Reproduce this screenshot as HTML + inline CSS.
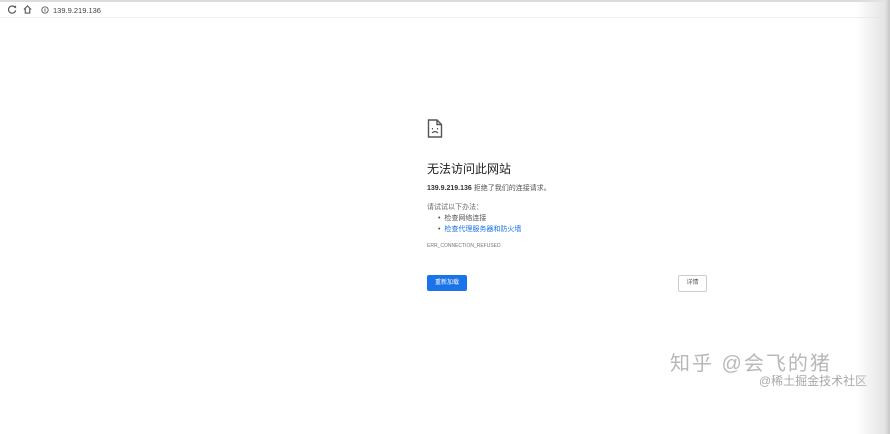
<!DOCTYPE html>
<html><head><meta charset="utf-8"><style>
*{margin:0;padding:0;box-sizing:border-box}
body{width:890px;height:434px;overflow:hidden;background:#fff;position:relative;font-family:"Liberation Sans","Noto Sans CJK SC",sans-serif;color:#333}
.top{position:absolute;left:0;top:0;width:890px;height:2px;background:#dcdcdc}
.bar{position:absolute;left:0;top:2px;width:890px;height:16px;background:#fff;border-bottom:1px solid #eee}
.edge{position:absolute;right:0;top:0;width:34px;height:434px;background:linear-gradient(to right,rgba(230,230,230,0),#e4e4e4 85%,#c8c8c8)}
.t{position:absolute;white-space:nowrap}
</style></head><body>
<div class="top"></div>
<div class="bar">
<svg style="position:absolute;left:8px;top:3px" width="9" height="9" viewBox="0 0 10 10"><path d="M8 3A4 4 0 1 0 8.5 6" fill="none" stroke="#555" stroke-width="1.3"/><path d="M6 1L9 1 9 4z" fill="#555"/></svg>
<svg style="position:absolute;left:23px;top:3px" width="9" height="9" viewBox="0 0 10 10"><path d="M1 5L5 1 9 5M2.5 4V9H7.5V4" fill="none" stroke="#555" stroke-width="1.2"/></svg>
<svg style="position:absolute;left:41px;top:4px" width="8" height="8" viewBox="0 0 10 10"><circle cx="5" cy="5" r="4" fill="none" stroke="#666" stroke-width="1.2"/><path d="M5 3v4" stroke="#666" stroke-width="1.2"/></svg>
<div class="t" style="left:53px;top:4px;font-size:7.5px;color:#444">139.9.219.136</div>
</div>
<svg style="position:absolute;left:427px;top:119px" width="16" height="19" viewBox="0 0 16 19"><path d="M1.5 1H10L14.5 5.5V18H1.5Z M10 1V5.5H14.5" fill="none" stroke="#555" stroke-width="1.4"/><path d="M5 14Q8 11 11 14" fill="none" stroke="#555" stroke-width="1.2"/><path d="M5.5 9v1.5M10.5 9v1.5" stroke="#555" stroke-width="1.2"/></svg>
<div class="t" style="left:427px;top:160px;font-size:12px;color:#202124">无法访问此网站</div>
<div class="t" style="left:427px;top:183px;font-size:7px;color:#555"><b style="color:#333">139.9.219.136</b> 拒绝了我们的连接请求。</div>
<div class="t" style="left:427px;top:202px;font-size:7px;color:#666">请试试以下办法：</div>
<div class="t" style="left:438px;top:213px;font-size:7px;color:#555">•&nbsp;&nbsp;检查网络连接</div>
<div class="t" style="left:438px;top:224px;font-size:7px;color:#555">•&nbsp;&nbsp;<span style="color:#1a73e8">检查代理服务器和防火墙</span></div>
<div class="t" style="left:427px;top:243px;font-size:5px;color:#777">ERR_CONNECTION_REFUSED</div>
<div style="position:absolute;left:427px;top:275px;width:40px;height:16px;background:#1a73e8;border-radius:2px;color:#fff;font-size:6px;text-align:center;line-height:16px">重新加载</div>
<div style="position:absolute;left:678px;top:275px;width:29px;height:17px;border:1px solid #ccc;border-radius:2px;color:#555;font-size:6px;text-align:center;line-height:15px">详情</div>
<div class="t" style="left:670px;top:347px;font-size:20px;color:#b8b8b8;letter-spacing:2px">知乎 @会飞的猪</div>
<div class="t" style="left:759px;top:372px;font-size:12px;color:#a8a8a8">@稀土掘金技术社区</div>
<div class="edge"></div>
</body></html>
